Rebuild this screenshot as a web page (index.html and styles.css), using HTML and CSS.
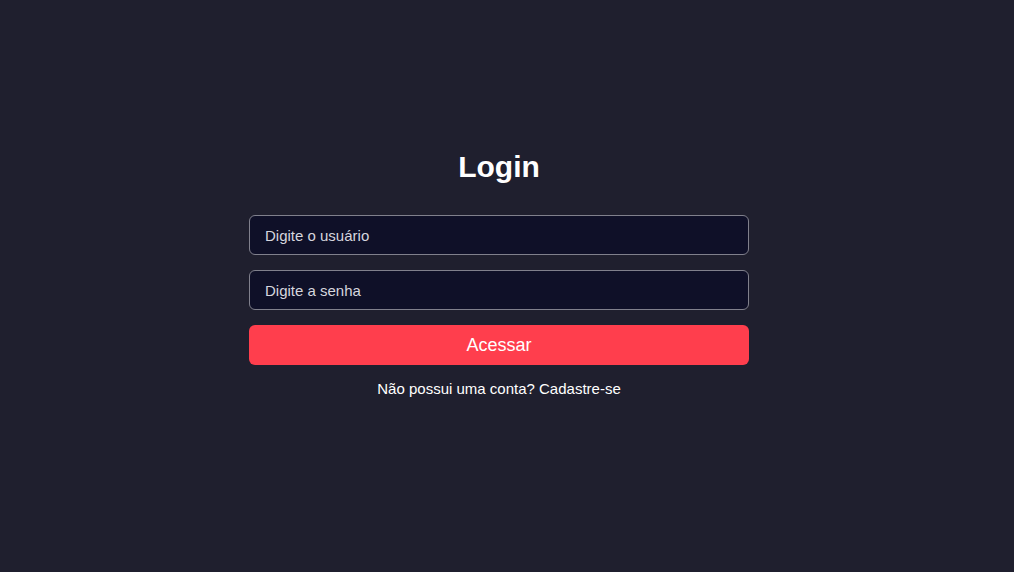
FILE: index.html
```html
<!DOCTYPE html>
<html lang="pt-BR">
<head>
<meta charset="utf-8">
<title>Login</title>
<link rel="stylesheet" href="styles.css">
</head>
<body>
<main class="page">
  <section class="login">
    <h1 class="login-title">Login</h1>
    <form class="login-form">
      <input class="field" type="text" placeholder="Digite o usuário">
      <input class="field" type="password" placeholder="Digite a senha">
      <button class="submit" type="button">Acessar</button>
    </form>
    <p class="signup">Não possui uma conta? <a class="signup-link" href="#">Cadastre-se</a></p>
  </section>
</main>
</body>
</html>
```

FILE: styles.css
```css
* { box-sizing: border-box; }
html, body { margin: 0; padding: 0; }
body {
  background: #1f1f2e;
  color: #ffffff;
  font-family: "Liberation Sans", Arial, sans-serif;
}
.page {
  min-height: 100vh;
  display: flex;
  align-items: center;
  justify-content: center;
  padding: 0 16px 25px 0;
}
.login {
  width: 500px;
  display: flex;
  flex-direction: column;
  align-items: stretch;
}
.login-title {
  margin: 0 0 32px;
  font-size: 30px;
  font-weight: 700;
  text-align: center;
  line-height: 33px;
}
.login-form {
  display: flex;
  flex-direction: column;
  gap: 15px;
}
.field {
  height: 40px;
  padding: 0 15px;
  border: 1px solid #80808c;
  border-radius: 6px;
  background: #0f1028;
  color: #ffffff;
  font-family: inherit;
  font-size: 15px;
  outline: none;
}
.field::placeholder { color: #d6d6de; opacity: 1; }
.submit {
  height: 40px;
  border: none;
  border-radius: 6px;
  background: #ff3e4d;
  color: #ffffff;
  font-family: inherit;
  font-size: 18px;
  cursor: pointer;
}
.signup {
  margin: 15px 0 0;
  text-align: center;
  font-size: 15px;
  line-height: 17px;
}
.signup-link {
  color: #ffffff;
  text-decoration: none;
}
```
